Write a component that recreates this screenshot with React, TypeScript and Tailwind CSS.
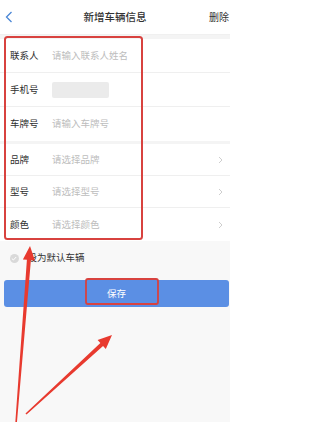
import React from 'react';

const font = { fontFamily: '"Noto Sans CJK SC", "Noto Sans", sans-serif' };

type Row = { label: string; placeholder?: string; masked?: boolean; select?: boolean; h: string };

const groupA: Row[] = [
  { label: '联系人', placeholder: '请输入联系人姓名', h: 'h-[34px]' },
  { label: '手机号', masked: true, h: 'h-[34px]' },
  { label: '车牌号', placeholder: '请输入车牌号', h: 'h-[34px]' },
];

const groupB: Row[] = [
  { label: '品牌', placeholder: '请选择品牌', select: true, h: 'h-[32px]' },
  { label: '型号', placeholder: '请选择型号', select: true, h: 'h-[32px]' },
  { label: '颜色', placeholder: '请选择颜色', select: true, h: 'h-[33px]' },
];

const Chevron = () => (
  <svg width="5" height="8" viewBox="0 0 5 8" className="shrink-0">
    <polyline points="1,1 4,4 1,7" fill="none" stroke="#c8c8c8" strokeWidth="0.9" />
  </svg>
);

const FormRow = ({ row, last }: { row: Row; last: boolean }) => (
  <div
    className={`flex items-center bg-white pl-[10px] pr-[7px] text-[9.5px] leading-none ${row.h} ${
      last ? '' : 'border-b border-[#efefef]'
    }`}
  >
    <span className="w-[42px] shrink-0 text-[#2f2f2f]">{row.label}</span>
    <div className="flex flex-1 items-center">
      {row.masked ? (
        <div className="h-[16px] w-[57px] rounded-[2px] bg-[#ebebeb] blur-[0.6px]" />
      ) : (
        <span className="text-[#bdbdbd]">{row.placeholder}</span>
      )}
    </div>
    {row.select && <Chevron />}
  </div>
);

export default function App() {
  return (
    <div className="relative h-[422px] w-[230px] overflow-hidden bg-[#f8f8f8]" style={font}>
      {/* header */}
      <div className="grid h-[35px] grid-cols-[1fr_auto_1fr] items-center border-b border-[#f0f0f0] bg-white leading-none">
        <div className="pl-[5px]">
          <svg width="8" height="12" viewBox="0 0 8 12" className="block">
            <polyline points="6.5,1 1.5,6 6.5,11" fill="none" stroke="#4a86d6" strokeWidth="1.3" />
          </svg>
        </div>
        <span className="text-[10.5px] font-medium text-[#333]">新增车辆信息</span>
        <span className="justify-self-end pr-[1px] text-[10px] text-[#333]">删除</span>
      </div>

      <div className="h-[4px] bg-[#f4f4f4]" />
      <div>
        {groupA.map((row, i) => (
          <FormRow key={row.label} row={row} last={i === groupA.length - 1} />
        ))}
      </div>
      <div className="h-[3px] bg-[#f4f4f4]" />
      <div>
        {groupB.map((row, i) => (
          <FormRow key={row.label} row={row} last={i === groupB.length - 1} />
        ))}
      </div>

      {/* default checkbox */}
      <div className="mt-[11px] flex h-[12px] items-center pl-[9.5px] leading-none">
        <span className="flex h-[9px] w-[9px] items-center justify-center rounded-full bg-[#d9d9d9]">
          <svg width="6" height="5" viewBox="0 0 6 5">
            <polyline points="0.8,2.5 2.4,4 5.2,1" fill="none" stroke="#fff" strokeWidth="1" />
          </svg>
        </span>
        <span className="ml-[9px] text-[9.5px] text-[#333]">设为默认车辆</span>
      </div>

      <button
        type="button"
        className="ml-[4px] mr-[1px] mt-[16px] flex h-[27px] w-[225px] items-center justify-center rounded-[3px] bg-[#5b8fe4] text-[9.5px] leading-none text-white"
      >
        保存
      </button>

      {/* red annotations */}
      <svg className="pointer-events-none absolute left-0 top-0" width="230" height="422" viewBox="0 0 230 422">
        <rect x="5" y="37" width="137" height="202" rx="2.5" fill="none" stroke="#d8423f" strokeWidth="2" />
        <rect x="86" y="279" width="72" height="25" rx="2" fill="none" stroke="#d8423f" strokeWidth="1.8" />
        <polygon
          points="30,246 34.9,260.5 30.9,260.2 16.8,424 15.2,424 26.9,259.8 22.9,259.5"
          fill="#e83a2f"
        />
        <polygon
          points="112,335 105.8,348.9 103.05,345.97 26.54,414.59 25.46,413.41 100.35,343.03 97.6,340.1"
          fill="#e83a2f"
        />
      </svg>
    </div>
  );
}
